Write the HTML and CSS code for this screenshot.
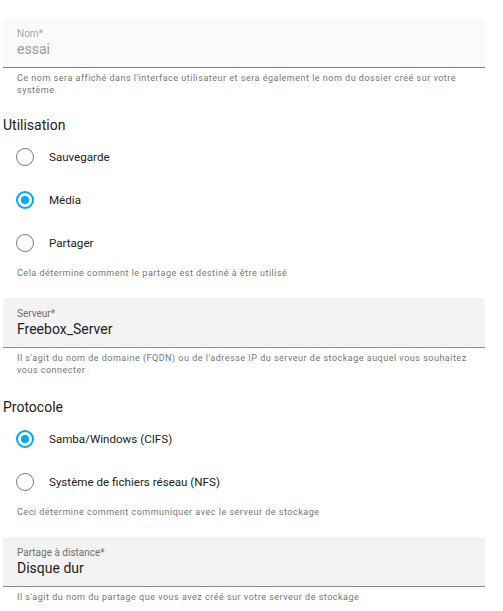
FILE: index.html
```html
<!DOCTYPE html>
<html lang="fr">
<head>
<meta charset="utf-8">
<link rel="stylesheet" href="styles.css">
</head>
<body>
<div class="form">
  <div class="field disabled">
    <div class="field-label">Nom*</div>
    <div class="field-value">essai</div>
  </div>
  <p class="helper">Ce nom sera affiché dans l'interface utilisateur et sera également le nom du dossier créé sur votre système.</p>

  <h3 class="section">Utilisation</h3>
  <div class="radios">
    <div class="radio-row"><span class="radio"></span><span class="radio-label">Sauvegarde</span></div>
    <div class="radio-row"><span class="radio checked"></span><span class="radio-label">Média</span></div>
    <div class="radio-row"><span class="radio"></span><span class="radio-label">Partager</span></div>
  </div>
  <p class="helper">Cela détermine comment le partage est destiné à être utilisé</p>

  <div class="field spaced">
    <div class="field-label">Serveur*</div>
    <div class="field-value">Freebox_Server</div>
  </div>
  <p class="helper">Il s'agit du nom de domaine (FQDN) ou de l'adresse IP du serveur de stockage auquel vous souhaitez vous connecter</p>

  <h3 class="section wide">Protocole</h3>
  <div class="radios">
    <div class="radio-row"><span class="radio checked"></span><span class="radio-label">Samba/Windows (CIFS)</span></div>
    <div class="radio-row"><span class="radio"></span><span class="radio-label">Système de fichiers réseau (NFS)</span></div>
  </div>
  <p class="helper">Ceci détermine comment communiquer avec le serveur de stockage</p>

  <div class="field spaced">
    <div class="field-label">Partage à distance*</div>
    <div class="field-value">Disque dur</div>
  </div>
  <p class="helper">Il s'agit du nom du partage que vous avez créé sur votre serveur de stockage</p>
</div>
</body>
</html>
```

FILE: styles.css
```css
* { box-sizing: border-box; }
html, body { margin: 0; background: #fff; }
body {
  font-family: Roboto, "Noto Sans", sans-serif;
  color: #212121;
}
.form {
  width: 485px;
  padding: 18px 0 0 3px;
}
.field {
  height: 50px;
  background: #f3f3f3;
  border-bottom: 1px solid #8a8a8a;
  border-radius: 4px 4px 0 0;
  padding: 10px 14px 0;
}
.field.spaced { margin-top: 19px; }
.field.disabled {
  background: #fafafa;
  border-bottom-color: #03a9f4;
}
.field-label {
  font-size: 10px;
  line-height: 12px;
  color: #6f6f6f;
}
.field-value {
  font-size: 14px;
  line-height: 18px;
  color: #212121;
}
.disabled .field-label { color: #a8a8a8; }
.disabled .field-value { color: #9a9a9a; }
.helper {
  margin: 0;
  padding: 4px 14px 0;
  font-size: 9px;
  line-height: 12px;
  letter-spacing: 0.5px;
  color: #757575;
}
.section {
  margin: 19px 0 0;
  font-size: 14px;
  line-height: 20px;
  font-weight: 400;
  color: #212121;
}
.section.wide { margin-top: 21px; }
.radios {
  display: flex;
  flex-direction: column;
  gap: 3px;
  padding-top: 2px;
}
.radio-row {
  height: 40px;
  display: flex;
  align-items: center;
  padding-left: 13px;
}
.radio {
  width: 18px;
  height: 18px;
  border-radius: 50%;
  border: 1.5px solid #7a7a7a;
  display: flex;
  align-items: center;
  justify-content: center;
  flex: none;
}
.radio.checked { border: 2px solid #03a9f4; }
.radio.checked::after {
  content: "";
  width: 8px;
  height: 8px;
  border-radius: 50%;
  background: #03a9f4;
}
.radio-label {
  margin-left: 15px;
  font-size: 11.6px;
  color: #212121;
}
```
